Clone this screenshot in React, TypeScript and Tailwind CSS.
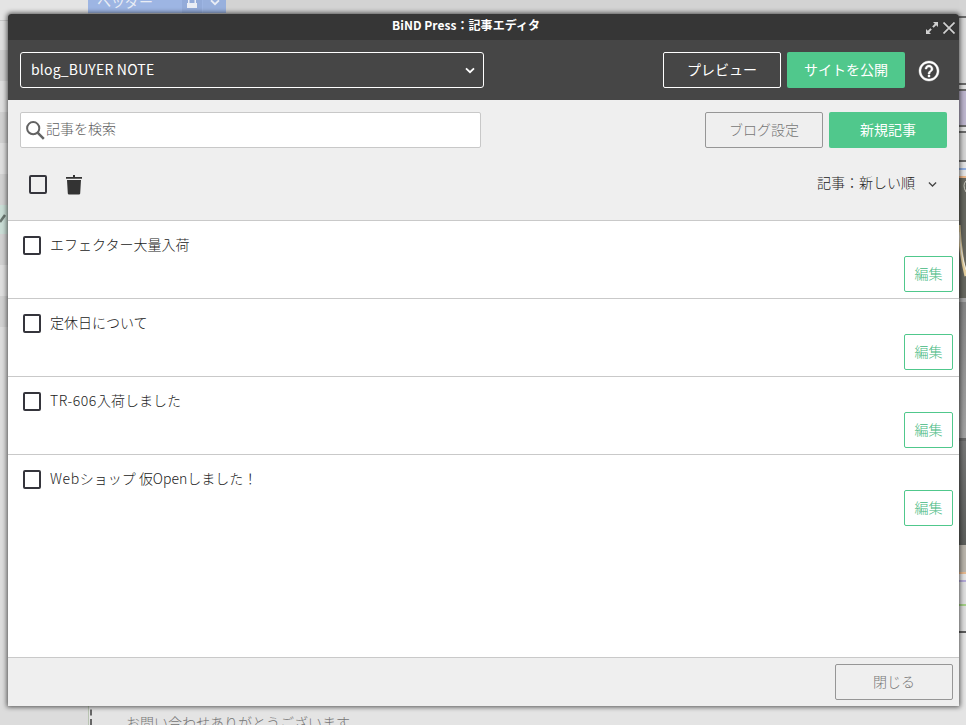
import { useState } from "react";
import clsx from "clsx";

type Article = { id: number; latin?: string; title: string };

const articles: Article[] = [
  { id: 1, title: "エフェクター大量入荷" },
  { id: 2, title: "定休日について" },
  { id: 3, latin: "TR-606", title: "入荷しました" },
  { id: 4, latin: "Web", title: "ショップ 仮Openしました！" },
];

// height + colour of every stripe left visible beside the dialog
const leftBands = [
  "h-[20px] bg-[#e4e4e4]",
  "h-[1px] bg-[#c6c6c6]",
  "h-[29px] bg-[#dedede]",
  "h-[31px] bg-[#d0d0d0]",
  "h-[31px] bg-[#dedede]",
  "h-[31px] bg-[#d0d0d0]",
  "h-[31px] bg-[#dedede]",
  "h-[31px] bg-[#d0d0d0]",
  "h-[29px] bg-[#c9ddd5]",
  "h-[31px] bg-[#d0d0d0]",
  "h-[31px] bg-[#dedede]",
  "h-[31px] bg-[#d0d0d0]",
  "grow bg-[#dcdcdc]",
];

const rightBands = [
  "h-[16px] bg-[#d4d4d4]",
  "h-[2px] bg-[#6b6b6b]",
  "h-[65px] bg-[#d9d9d9]",
  "h-[2px] bg-[#6b6b6b]",
  "h-[4px] bg-[#e4e4e4]",
  "h-[2px] bg-[#6b6b6b]",
  "h-[34px] bg-[#bcb5cd]",
  "h-[2px] bg-[#6b6b6b]",
  "h-[4px] bg-[#e4e4e4]",
  "h-[2px] bg-[#6b6b6b]",
  "h-[27px] bg-[#d4d4d4]",
  "h-[2px] bg-[#6b6b6b]",
  "h-[6px] bg-[#e4e4e4]",
  "h-[2px] bg-[#90addf]",
  "h-[6px] bg-[#e4e4e4]",
  "h-[2px] bg-[#eab588]",
  "h-[120px] bg-[#66675f]",
  "h-[4px] bg-[#a5a5a5]",
  "h-[136px] bg-linear-to-b from-[#858585] to-[#a3a3a3]",
  "h-[3px] bg-[#666666]",
  "h-[104px] bg-linear-to-b from-[#777777] to-[#5c5e5b]",
  "h-[27px] bg-[#b9b4ab]",
  "h-[2px] bg-[#e5b88f]",
  "h-[6px] bg-[#e4e4e4]",
  "h-[2px] bg-[#b3a9d6]",
  "h-[22px] bg-[#dedede]",
  "h-[2px] bg-[#a3cf86]",
  "h-[25px] bg-[#dedede]",
  "h-[2px] bg-[#5b5b5b]",
  "grow bg-[#e4e4e4]",
];

function Chevron({ className }: { className?: string }) {
  return (
    <svg viewBox="0 0 10 7" className={className} fill="none" stroke="currentColor">
      <path d="M1 1.3 5 5.2 9 1.3" />
    </svg>
  );
}

function CheckBox({ checked, onClick }: { checked: boolean; onClick: () => void }) {
  return (
    <button
      role="checkbox"
      aria-checked={checked}
      onClick={onClick}
      className={clsx(
        "h-[19px] w-[18px] shrink-0 rounded-[2px] border-2 border-[#35353c]",
        checked && "bg-[#35353c]"
      )}
    />
  );
}

function Backdrop() {
  return (
    <div className="flex h-full">
      <div className="flex w-[88px] flex-col">
        {leftBands.map((band, i) => (
          <div key={i} className={clsx("shrink-0", band)} />
        ))}
      </div>
      <div className="flex flex-1 flex-col justify-between bg-[#d3d3d3]">
        <div className="flex h-[13px] w-[138px] overflow-hidden bg-[#9db5e3] text-[14px] leading-[13px] text-[#e9edf5]">
          <span className="w-[94px] -translate-y-[5px] pl-[9px] whitespace-nowrap">ヘッダー</span>
          <span className="flex w-[20px] justify-center bg-[#93abd9]">
            <svg viewBox="0 0 12 10" className="h-[10px] w-[12px]" fill="currentColor">
              <path d="M1 3h10v5H1zM2 0h1.5v3H2zM8.5 0H10v3H8.5z" />
            </svg>
          </span>
          <span className="ml-px flex flex-1 justify-center bg-[#98b0dd]">
            <Chevron className="h-[7px] w-[10px] -translate-y-px stroke-[1.8]" />
          </span>
        </div>
        <div className="h-[25px] border-l border-[#b9c4b2] bg-[#e4e4e4] pl-px">
          <div className="h-full overflow-hidden border-l-2 border-dashed border-[#666666] pt-[15px] pl-[34px] text-[14px] leading-[14px] font-light text-[#757575]">
            お問い合わせありがとうございます
          </div>
        </div>
      </div>
      <div className="flex w-[7px] flex-col">
        {rightBands.map((band, i) => (
          <div key={i} className={clsx("shrink-0", band)} />
        ))}
      </div>
    </div>
  );
}

export default function App() {
  const [selected, setSelected] = useState<number[]>([]);
  const [search, setSearch] = useState("");

  const allSelected = selected.length === articles.length;

  function toggle(id: number) {
    setSelected((prev) =>
      prev.includes(id) ? prev.filter((x) => x !== id) : [...prev, id]
    );
  }

  return (
    <main className="relative h-[725px] w-[966px] overflow-hidden font-['Noto_Sans_CJK_JP',sans-serif]">
      <Backdrop />

      {/* Reflection and pencil peeking out at the edges */}
      <svg className="absolute top-[178px] right-0 h-[120px] w-[7px]" viewBox="0 0 7 120" fill="none">
        <path d="M7 3Q3 7 7 14" stroke="#c9c8bd" />
        <path d="M0 47Q1 75 7 98" stroke="#e5cf9d" strokeWidth="3" />
        <path d="M0 54Q2 77 7 92" stroke="#f0eee6" />
      </svg>
      <svg className="absolute top-[214px] left-0 h-[9px] w-[7px]" viewBox="0 0 7 9">
        <path d="M0 8 5 1" stroke="#69756f" strokeWidth="2.5" />
      </svg>

      <div className="absolute top-[14px] left-[8px] flex h-[692px] w-[951px] flex-col overflow-hidden rounded-t-[3px] bg-white shadow-[0_0_5px_1px_rgba(0,0,0,0.65)]">
        <header className="relative flex h-[26px] shrink-0 items-center justify-center bg-[#363636]">
          <h1 className="pr-[35px] pb-[4px] text-[12px] leading-[18px] font-bold tracking-[0.05px] whitespace-nowrap text-white">
            BiND Press：記事エディタ
          </h1>
          <div className="absolute top-[8px] right-[4px] flex items-center gap-[5px] text-[#d0d0d0]">
            <svg viewBox="0 0 12 12" className="size-[12px]" fill="currentColor">
              <path d="M7 0h5v5L10.2 3.2 7.6 5.8 6.2 4.4 8.8 1.8zM5 12H0V7l1.8 1.8 2.6-2.6 1.4 1.4-2.6 2.6z" />
            </svg>
            <svg viewBox="0 0 12 12" className="size-[12px]" stroke="currentColor" strokeWidth="1.7">
              <path d="M.5.5l11 11M11.5.5l-11 11" />
            </svg>
          </div>
        </header>

        <div className="flex h-[60px] shrink-0 items-center bg-[#464646] pl-[12px] text-[14px] text-white">
          <button className="flex h-[36px] w-[464px] items-center justify-between rounded-[3px] border border-white pr-[8px] pl-[10px]">
            <span className="pb-[2px] tracking-[0.2px]">blog_BUYER NOTE</span>
            <Chevron className="h-[7px] w-[10px] stroke-[1.8]" />
          </button>
          <button className="ml-auto h-[36px] w-[118px] rounded-[2px] border border-white pb-[2px]">プレビュー</button>
          <button className="ml-[6px] h-[36px] w-[118px] rounded-[2px] bg-[#50c88c] pb-[2px]">サイトを公開</button>
          <svg viewBox="0 0 24 24" className="mt-px mr-[18px] ml-[12px] size-[24px]" fill="currentColor" stroke="currentColor" strokeWidth="0.4">
            <path d="M11 18h2v-2h-2v2zm1-16C6.48 2 2 6.48 2 12s4.48 10 10 10 10-4.48 10-10S17.52 2 12 2zm0 18c-4.41 0-8-3.59-8-8s3.59-8 8-8 8 3.59 8 8-3.59 8-8 8zm0-14c-2.21 0-4 1.79-4 4h2c0-1.1.9-2 2-2s2 .9 2 2c0 2-3 1.75-3 5h2c0-2.25 3-2.5 3-5 0-2.21-1.79-4-4-4z" />
          </svg>
        </div>

        <section className="h-[121px] shrink-0 border-b border-[#c9c9c9] bg-[#efefef] pt-[12px] text-[14px]">
          <div className="flex pr-[12px] pl-[12px]">
            <label className="flex h-[36px] w-[461px] items-center rounded-[2px] border border-[#c8c8c8] bg-white pl-[5px]">
              <svg viewBox="0 0 19 19" className="size-[19px] shrink-0" fill="none" stroke="#636363">
                <circle cx="7.2" cy="7.2" r="6.1" strokeWidth="2" />
                <path d="m11.6 11.6 6.2 6.2" strokeWidth="2.5" />
              </svg>
              <input
                value={search}
                onChange={(e) => setSearch(e.target.value)}
                placeholder="記事を検索"
                className="ml-px flex-1 pb-[3px] font-light outline-none placeholder:text-[#606060]"
              />
            </label>
            <button className="ml-auto h-[36px] w-[118px] rounded-[2px] border border-[#969696] pb-[2px] font-light text-[#777777]">
              ブログ設定
            </button>
            <button className="ml-[6px] h-[36px] w-[118px] rounded-[2px] bg-[#50c88c] pb-[2px] text-white">新規記事</button>
          </div>
          <div className="mt-[26px] flex h-[21px] items-center pr-[22px] pl-[21px]">
            <CheckBox
              checked={allSelected}
              onClick={() => setSelected(allSelected ? [] : articles.map((a) => a.id))}
            />
            <svg viewBox="0 0 16 20" className="ml-[19px] h-[20px] w-[16px]" fill="#333333">
              <path d="M7 0h2v2h7v1.7H0V2h7zM1 5h14l-.8 13.5a1.2 1.2 0 0 1-1.2 1.1H3a1.2 1.2 0 0 1-1.2-1.1z" />
            </svg>
            <button className="ml-auto flex items-center gap-[13px] font-light text-[#222222]">
              <span className="pb-[4px]">記事：新しい順</span>
              <Chevron className="h-[7px] w-[9px] text-[#444444] stroke-[1.4]" />
            </button>
          </div>
        </section>

        <ul className="grow">
          {articles.map((article) => (
            <li
              key={article.id}
              className="flex h-[78px] items-start justify-between border-b border-[#c9c9c9] pr-[6px] pl-[15px] last:border-0"
            >
              <div className="mt-[15px] flex h-[19px] items-center gap-[9px]">
                <CheckBox checked={selected.includes(article.id)} onClick={() => toggle(article.id)} />
                <span className="pb-[3px] text-[14px] leading-[18px] font-light text-[#222222]">
                  {article.latin && <span className="tracking-[0.6px]">{article.latin}</span>}
                  {article.title}
                </span>
              </div>
              <button className="mt-[35px] h-[36px] w-[49px] rounded-[2px] border border-[#50c88c] pb-[2px] text-[14px] font-light text-[#3fb87c]">
                編集
              </button>
            </li>
          ))}
        </ul>

        <footer className="flex h-[49px] shrink-0 items-center justify-end border-t border-[#c9c9c9] bg-[#efefef] pr-[6px]">
          <button className="h-[36px] w-[118px] rounded-[2px] border border-[#969696] pb-[2px] text-[14px] font-light text-[#777777]">
            閉じる
          </button>
        </footer>
      </div>
    </main>
  );
}
